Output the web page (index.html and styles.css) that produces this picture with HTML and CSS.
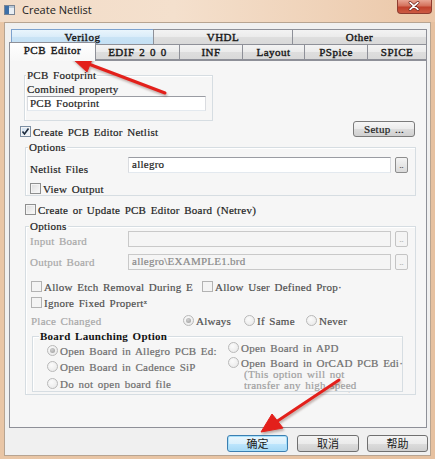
FILE: index.html
```html
<!DOCTYPE html>
<html>
<head>
<meta charset="utf-8">
<title>Create Netlist</title>
<link rel="stylesheet" href="styles.css">
</head>
<body>
<div class="window">
  <div class="titlebar">
    <svg class="app-icon" width="11" height="10" viewBox="0 0 11 10">
      <rect x="0.5" y="0.5" width="10" height="9" fill="#e9eef3" stroke="#7a8594"/>
      <rect x="1" y="1" width="4" height="8" fill="#3d6fa8"/>
      <rect x="5" y="1" width="5" height="2" fill="#b9c7d6"/>
    </svg>
    <span class="title">Create Netlist</span>
    <div class="close">
      <svg width="35" height="14" viewBox="0 0 35 14">
        <path d="M13.5 3.5 L21.5 10.5 M21.5 3.5 L13.5 10.5" stroke="#6b2119" stroke-width="3.2" stroke-linecap="round"/>
        <path d="M13.5 3.5 L21.5 10.5 M21.5 3.5 L13.5 10.5" stroke="#ffffff" stroke-width="1.8" stroke-linecap="round"/>
      </svg>
    </div>
  </div>

  <div class="client">
    <div class="tabs">
      <div class="tabrow back">
        <div class="tab t-verilog hot">Verilog</div>
        <div class="tab t-vhdl">VHDL</div>
        <div class="tab t-other last">Other</div>
      </div>
      <div class="tabrow front">
        <div class="tab t-pcb selected">PCB Editor</div>
        <div class="tab t-edif">EDIF 2 0 0</div>
        <div class="tab t-inf">INF</div>
        <div class="tab t-layout">Layout</div>
        <div class="tab t-pspice">PSpice</div>
        <div class="tab t-spice last">SPICE</div>
      </div>
    </div>

    <div class="panel">
      <div class="group g-foot">
        <div class="legend">PCB Footprint</div>
        <div class="txt l-combined">Combined property</div>
        <div class="input in-foot">PCB Footprint</div>
      </div>

      <div class="row r-create">
        <div class="chk c-create"><span class="box checked"><svg width="9" height="9" viewBox="0 0 9 9"><path d="M1.5 4.5 L3.5 7 L7.5 1.5" fill="none" stroke="#1d2a3a" stroke-width="1.6"/></svg></span><span class="txt">Create PCB Editor Netlist</span></div>
        <div class="btn setup">Setup ...</div>
      </div>

      <div class="group g-opt1">
        <div class="legend lg-opt1">Options</div>
        <div class="row r-field r-netlist">
          <span class="txt fld-label">Netlist Files</span>
          <div class="input wide">allegro</div>
          <div class="dots">..</div>
        </div>
        <div class="chk c-view"><span class="box"></span><span class="txt">View Output</span></div>
      </div>

      <div class="chk c-update"><span class="box"></span><span class="txt">Create or Update PCB Editor Board (Netrev)</span></div>

      <div class="group g-opt2">
        <div class="legend lg-opt2">Options</div>
        <div class="row r-field r-inboard">
          <span class="txt fld-label dim">Input Board</span>
          <div class="input wide disabled"></div>
          <div class="dots disabled">..</div>
        </div>
        <div class="row r-field r-outboard">
          <span class="txt fld-label dim">Output Board</span>
          <div class="input wide disabled">allegro\EXAMPLE1.brd</div>
          <div class="dots disabled">..</div>
        </div>
        <div class="row r-allow">
          <div class="chk c-etch"><span class="box off"></span><span class="txt grey">Allow Etch Removal During E</span></div>
          <div class="chk"><span class="box off"></span><span class="txt grey">Allow User Defined Prop&middot;</span></div>
        </div>
        <div class="row r-ignore">
          <div class="chk"><span class="box off"></span><span class="txt grey">Ignore Fixed Propert&#x2e3;</span></div>
        </div>
        <div class="row r-place">
          <span class="txt dim place-label">Place Changed</span>
          <div class="radio ra-always"><span class="dot on"></span><span class="txt grey">Always</span></div>
          <div class="radio ra-same"><span class="dot"></span><span class="txt grey">If Same</span></div>
          <div class="radio"><span class="dot"></span><span class="txt grey">Never</span></div>
        </div>

        <div class="group g-board">
          <div class="legend lg-board">Board Launching Option</div>
          <div class="cols">
            <div class="col col-left">
              <div class="radio rr1"><span class="dot on"></span><span class="txt grey2">Open Board in Allegro PCB Ed:</span></div>
              <div class="radio rr2"><span class="dot"></span><span class="txt grey2">Open Board in Cadence SiP</span></div>
              <div class="radio rr3"><span class="dot"></span><span class="txt grey2">Do not open board file</span></div>
            </div>
            <div class="col col-right">
              <div class="radio"><span class="dot"></span><span class="txt grey2">Open Board in APD</span></div>
              <div class="radio rr2b"><span class="dot"></span><span class="txt grey2">Open Board in OrCAD PCB Edi&middot;</span></div>
              <div class="note">
                <div class="txt">(This option will not</div>
                <div class="txt">transfer any high speed</div>
                <div class="txt">constraints to OrCAD)</div>
              </div>
            </div>
          </div>
        </div>
      </div>
    </div>

    <div class="buttons">
      <div class="pbtn default">确定</div>
      <div class="pbtn b-cancel">取消</div>
      <div class="pbtn b-help">帮助</div>
    </div>
  </div>

  <svg class="annot" width="435" height="459" viewBox="0 0 435 459">
    <g fill="#e3201b" stroke="#e3201b">
      <line x1="165" y1="93" x2="86" y2="63" stroke-width="3" stroke-linecap="round"/>
      <polygon points="72,58 93,57 87,72" stroke-width="1" stroke-linejoin="round"/>
      <line x1="339" y1="380" x2="276" y2="422" stroke-width="3" stroke-linecap="round"/>
      <polygon points="261,432 272,414 283,428" stroke-width="1" stroke-linejoin="round"/>
    </g>
  </svg>
</div>
</body>
</html>
```

FILE: styles.css
```css
html, body {
  margin: 0;
  padding: 0;
  background: #e8c4a4;
}

.window {
  position: relative;
  width: 435px;
  height: 459px;
  display: flex;
  flex-direction: column;
  background: linear-gradient(to right, #e9c6a6, #e6c1a0);
  overflow: hidden;
}

/* title bar */
.titlebar {
  height: 22px;
  flex: none;
  display: flex;
  align-items: center;
  background: linear-gradient(to right, #f2dcc8 0%, #f4e0cd 40%, #efd2b8 75%, #ebc7a8 100%);
}
.app-icon {
  margin-left: 4px;
  margin-top: -2px;
  flex: none;
}
.title {
  margin-left: 7px;
  margin-top: -3px;
  font-family: "Open Sans", "Noto Sans", sans-serif;
  font-size: 11px;
  color: #1b1b1b;
}
.close {
  margin-left: auto;
  margin-right: 3px;
  align-self: flex-start;
  width: 35px;
  height: 14px;
  box-sizing: border-box;
  border: 1px solid #8e3c30;
  border-top: none;
  border-radius: 0 0 4px 4px;
  background: linear-gradient(to bottom, #e8a593 0%, #d4715c 45%, #c0412c 55%, #cc5a43 100%);
  display: flex;
}
.close svg {
  margin-left: -1px;
  margin-top: -1px;
}

/* client */
.client {
  flex: 1;
  margin: 0 4px 3px 4px;
  box-sizing: border-box;
  border: 1px solid #b7a491;
  background: #f0f0f0;
  display: flex;
  flex-direction: column;
  align-items: flex-start;
}

.txt, .tab, .legend, .input, .btn, .dots {
  font-family: "Liberation Serif", "DejaVu Serif", serif;
  font-size: 11px;
  letter-spacing: 0.25px;
  word-spacing: 1.5px;
  line-height: 12px;
  color: #1e1e1e;
  white-space: nowrap;
  -webkit-text-stroke: 0.2px currentColor;
}

/* tabs */
.tabs {
  margin-left: 4px;
  margin-top: 6px;
  width: 418px;
}
.tabrow {
  display: flex;
}
.tabrow.back {
  height: 15px;
  padding-left: 2px;
}
.tabrow.front {
  height: 16px;
  align-items: flex-start;
}
.tab {
  box-sizing: border-box;
  height: 100%;
  border: 1px solid #8e9098;
  border-right: none;
  background: linear-gradient(to bottom, #f3f3f3 0%, #ebebeb 50%, #dedede 51%, #d9d9d9 100%);
  text-align: center;
  color: #1a1a1a;
  letter-spacing: 0.5px;
  -webkit-text-stroke: 0.4px currentColor;
}
.tab.last {
  border-right: 1px solid #8e9098;
}
.tabrow.back .tab {
  border-bottom: none;
  line-height: 14px;
}
.tabrow.front .tab {
  line-height: 15px;
}
.tab.hot {
  background: linear-gradient(to bottom, #eaf5fc 0%, #d9ecf9 50%, #c9e3f5 51%, #c4e0f4 100%);
  border-color: #7da2ce;
}
.t-verilog { width: 142px; }
.t-vhdl { width: 139px; }
.t-other { width: 135px; }
.t-pcb { width: 87px; }
.t-edif { width: 83px; }
.t-inf { width: 63px; }
.t-layout { width: 62px; }
.t-pspice { width: 63px; }
.t-spice { width: 60px; }
.tab.selected {
  position: relative;
  z-index: 2;
  margin-top: -2px;
  height: 19px;
  border-right: 1px solid #8e9098;
  border-bottom: none;
  background: linear-gradient(to bottom, #ffffff, #f7f7f7);
  line-height: 17px;
}
.tab.selected + .tab {
  border-left: none;
}

/* panel */
.panel {
  width: 418px;
  height: 368px;
  margin-left: 4px;
  box-sizing: border-box;
  border: 1px solid #8e9098;
  background: #f6f6f6;
  display: flex;
  flex-direction: column;
  align-items: flex-start;
}

.group {
  box-sizing: border-box;
  border: 1px solid #d6dde2;
  box-shadow: inset 1px 1px 0 #ffffff;
  display: flex;
  flex-direction: column;
  align-items: flex-start;
  flex: none;
}
.legend {
  margin-top: -7px;
  padding: 0 1px;
  background: #f6f6f6;
}

.g-foot {
  margin: 14px 0 0 14px;
  width: 189px;
  height: 46px;
}
.g-foot .legend { margin-left: 1px; }
.l-combined { margin: 2px 0 0 2px; }

.input {
  box-sizing: border-box;
  height: 16px;
  border: 1px solid #abadb3;
  border-top-color: #9a9ca3;
  border-left-color: #dadce0;
  border-right-color: #dadce0;
  border-bottom-color: #e3e9ef;
  background: #ffffff;
  padding-left: 2px;
  line-height: 13px;
}
.in-foot {
  margin: 1px 0 0 2px;
  width: 179px;
  height: 15px;
}

.row {
  display: flex;
  flex: none;
}
.r-create {
  width: 100%;
  box-sizing: border-box;
  height: 16px;
  padding: 0 11px 0 10px;
  justify-content: space-between;
  align-items: flex-start;
}

.chk, .radio {
  display: flex;
  align-items: flex-start;
  height: 12px;
  flex: none;
}
.chk .txt, .radio .txt { margin-left: 2px; }

.box {
  width: 11px;
  height: 11px;
  box-sizing: border-box;
  border: 1px solid #8e8f8f;
  background: linear-gradient(135deg, #dcdcdc, #fbfbfb);
  box-shadow: inset 0 0 0 1px #f4f4f4;
  display: flex;
  align-items: center;
  justify-content: center;
  flex: none;
}
.box.checked {
  background: linear-gradient(135deg, #cfdff0, #f4f8fc);
  border-color: #7d8fa3;
}
.box.off {
  border-color: #b3b3b3;
  background: #f4f4f4;
  box-shadow: none;
}
.c-create { margin-top: 5px; }

.btn.setup {
  width: 62px;
  height: 16px;
  box-sizing: border-box;
  border: 1px solid #7b7b7b;
  border-radius: 3px;
  background: linear-gradient(to bottom, #f6f6f6 0%, #ebebeb 50%, #dddddd 51%, #d0d0d0 100%);
  text-align: center;
  line-height: 14px;
}

.g-opt1 {
  margin: 10px 0 0 15px;
  width: 391px;
  height: 49px;
}
.lg-opt1 { margin-left: 2px; }

.r-field {
  height: 16px;
  align-items: flex-start;
}
.fld-label {
  width: 98px;
  margin-left: 4px;
}
.r-netlist { margin-top: 4px; }
.r-netlist .fld-label { margin-top: 6px; }
.input.wide {
  width: 263px;
  padding-left: 3px;
}
.dots {
  width: 13px;
  height: 16px;
  margin-left: 4px;
  box-sizing: border-box;
  border: 1px solid #8d8d8d;
  border-radius: 2px;
  background: linear-gradient(to bottom, #f4f4f4, #dadada);
  font-size: 8px;
  letter-spacing: 0;
  line-height: 16px;
  text-align: center;
  color: #444;
}
.dots.disabled {
  border-color: #c4c4c4;
  background: #f4f4f4;
  color: #b0b0b0;
}
.input.disabled {
  background: #f5f5f5;
  border-color: #c9c9c9;
  color: #8a8a8a;
}

.c-view {
  margin: 10px 0 0 4px;
}
.c-update {
  margin: 8px 0 0 15px;
}

.g-opt2 {
  margin: 10px 0 0 15px;
  width: 391px;
  height: 169px;
}
.lg-opt2 { margin-left: 3px; }
.r-inboard { margin-top: -1px; }
.r-inboard .fld-label { margin-top: 4px; }
.r-outboard { margin-top: 7px; }
.r-outboard .fld-label { margin-top: 2px; }

.dim { color: #a8a8a8; }
.grey { color: #505050; }
.grey2 { color: #6e6e6e; }

.r-allow {
  margin: 11px 0 0 5px;
  height: 12px;
}
.c-etch { width: 171px; }
.r-ignore {
  margin: 4px 0 0 5px;
  height: 12px;
}
.r-place {
  margin: 6px 0 0 5px;
  height: 12px;
  align-items: flex-start;
}
.place-label { width: 152px; }
.ra-always { width: 61px; }
.ra-same { width: 62px; }

.dot {
  width: 11px;
  height: 11px;
  box-sizing: border-box;
  border: 1px solid #b9b9b9;
  border-radius: 50%;
  background: radial-gradient(circle at 40% 35%, #fbfbfb, #e6e6e6);
  display: flex;
  align-items: center;
  justify-content: center;
  flex: none;
}
.dot.on::after {
  content: "";
  width: 5px;
  height: 5px;
  border-radius: 50%;
  background: radial-gradient(circle at 40% 35%, #d0d0d0, #9b9b9b);
}

.g-board {
  margin: 9px 0 0 6px;
  width: 371px;
  height: 56px;
  overflow: visible;
}
.lg-board {
  margin-left: 6px;
  font-weight: bold;
  color: #111;
  -webkit-text-stroke: 0;
}
.cols {
  display: flex;
  align-items: flex-start;
}
.col {
  display: flex;
  flex-direction: column;
  align-items: flex-start;
}
.col-left {
  margin-left: 14px;
  width: 181px;
}
.rr1 { margin-top: 3px; }
.rr2 { margin-top: 4px; }
.rr3 { margin-top: 5px; }
.rr2b { margin-top: 3px; }
.note {
  margin-left: 16px;
  height: 24px;
  overflow: hidden;
}
.note .txt {
  line-height: 11px;
  color: #a0a0a0;
}

/* bottom buttons */
.buttons {
  margin: 7px 0 0 222px;
  display: flex;
  height: 17px;
}
.pbtn {
  box-sizing: border-box;
  height: 17px;
  width: 61px;
  border: 1px solid #707070;
  border-radius: 3px;
  background: linear-gradient(to bottom, #f4f4f4 0%, #ebebeb 50%, #dddddd 51%, #cfcfcf 100%);
  font-family: "Noto Sans CJK SC", sans-serif;
  font-size: 11px;
  line-height: 15px;
  text-align: center;
  color: #1a1a1a;
}
.pbtn.default {
  border-color: #3c7fb1;
  box-shadow: inset 0 0 0 1px #a7e0fb;
  background: linear-gradient(to bottom, #eaf6fd 0%, #d9f0fc 50%, #bee6fd 51%, #a7d9f5 100%);
}
.b-cancel {
  margin-left: 9px;
  width: 62px;
}
.b-help {
  margin-left: 8px;
}

/* annotation overlay */
.annot {
  position: absolute;
  left: 0;
  top: 0;
  pointer-events: none;
  filter: drop-shadow(1px 2px 1px rgba(90, 40, 30, 0.35));
}
```
